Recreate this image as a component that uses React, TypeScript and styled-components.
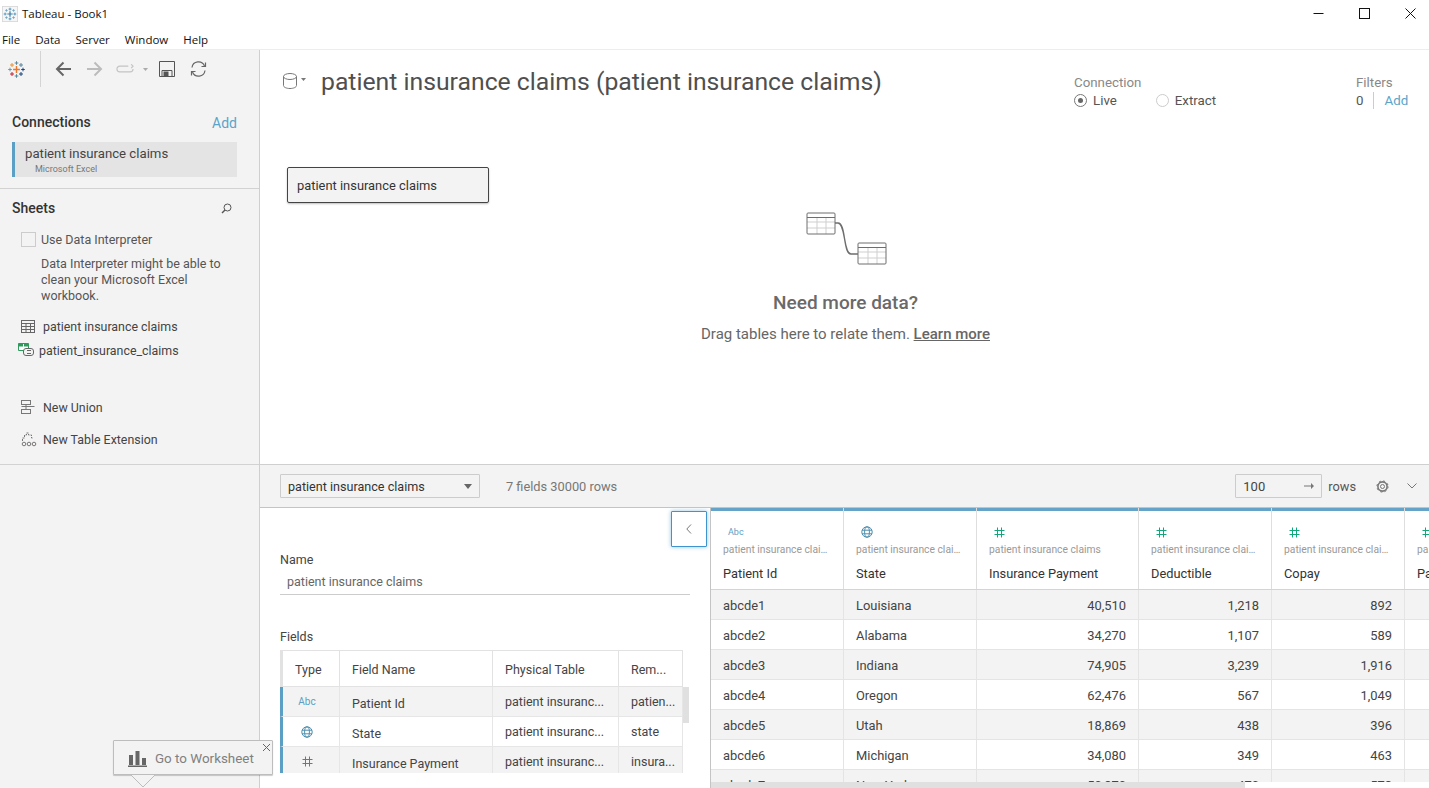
import React from "react";
import styled, { createGlobalStyle } from "styled-components";

const GlobalStyle = createGlobalStyle`
  html, body {
    margin: 0;
    padding: 0;
    height: 100%;
    overflow: hidden;
    background: #ffffff;
  }
  * {
    box-sizing: border-box;
  }
`;

const Window = styled.div`
  display: flex;
  flex-direction: column;
  position: relative;
  width: 1429px;
  height: 788px;
  overflow: hidden;
  font-family: "Roboto", "Liberation Sans", sans-serif;
  color: #444444;
`;

const TitleBar = styled.div`
  display: flex;
  align-items: center;
  height: 27px;
  padding-left: 2px;
  gap: 4px;
  font-family: "Open Sans", "Liberation Sans", sans-serif;
  font-size: 11.5px;
  color: #111111;
`;

const TitleText = styled.span`
  flex: 1;
`;

const WindowControls = styled.div`
  display: flex;
  margin-right: -4px;
`;

const WindowButton = styled.div`
  display: flex;
  align-items: center;
  justify-content: center;
  width: 46px;
  height: 27px;
`;

const MenuBar = styled.div`
  display: flex;
  align-items: center;
  height: 23px;
  padding: 3px 0 0 2px;
  gap: 15px;
  font-family: "Open Sans", "Liberation Sans", sans-serif;
  font-size: 11.5px;
  color: #111111;
  border-bottom: 1px solid #ededed;
`;

const Body = styled.div`
  display: flex;
  flex: 1;
  min-height: 0;
`;

const Sidebar = styled.aside`
  display: flex;
  flex-direction: column;
  width: 260px;
  flex-shrink: 0;
  background: #f3f3f3;
  border-right: 1px solid #cfcfcf;
`;

const Toolbar = styled.div`
  display: flex;
  align-items: center;
  height: 38px;
  padding-left: 8px;
`;

const ToolDivider = styled.span`
  width: 1px;
  height: 36px;
  margin: 0 14px 0 15px;
  background: #d4d4d4;
`;

const ToolIcon = styled.svg<{ $after?: number }>`
  flex-shrink: 0;
  margin-right: ${(p) => p.$after ?? 0}px;
`;

const SideSection = styled.section`
  padding: 0 22px 0 12px;
`;

const ConnectionSection = styled(SideSection)`
  height: 101px;
  padding-top: 25px;
  border-bottom: 1px solid #d2d2d2;
`;

const SideHeader = styled.div`
  display: flex;
  align-items: center;
  justify-content: space-between;
  height: 18px;
  font-size: 14px;
  font-weight: 500;
  color: #333333;
`;

const AddLink = styled.span<{ $size?: number }>`
  font-size: ${(p) => p.$size ?? 14}px;
  font-weight: 400;
  color: #5ba4c9;
`;

const SideAddLink = styled(AddLink)`
  padding-top: 2px;
`;

const ConnectionItem = styled.div`
  height: 35px;
  margin-top: 11px;
  padding: 4px 0 0 10px;
  background: #e4e4e4;
  border-left: 3px solid #5b9fc4;
  font-size: 13.2px;
  line-height: 15px;
  color: #444444;
`;

const ConnectionSub = styled.div`
  margin: 3px 0 0 10px;
  font-size: 9px;
  line-height: 11px;
  color: #777777;
`;

const SheetsSection = styled(SideSection)`
  height: 276px;
  padding-top: 10px;
  padding-right: 27px;
  border-bottom: 1px solid #d2d2d2;
`;

const InterpreterRow = styled.div`
  display: flex;
  align-items: center;
  gap: 5px;
  margin: 15px 0 0 9px;
  font-size: 12.5px;
  color: #555555;
`;

const CheckBox = styled.span`
  width: 15px;
  height: 15px;
  background: #f3f3f3;
  border: 1px solid #cccccc;
`;

const InterpreterHint = styled.p`
  width: 190px;
  margin: 9px 0 0 29px;
  font-size: 12.5px;
  line-height: 16px;
  color: #555555;
`;

const SheetRow = styled.div<{ $top: number; $gap: number; $indent: number }>`
  display: flex;
  align-items: center;
  gap: ${(p) => p.$gap}px;
  height: 16px;
  margin-top: ${(p) => p.$top}px;
  margin-left: ${(p) => p.$indent}px;
  font-size: 12.4px;
  color: #444444;
`;

const Main = styled.main`
  display: flex;
  flex-direction: column;
  flex: 1;
  min-width: 0;
`;

const TopPane = styled.div`
  height: 415px;
  flex-shrink: 0;
  border-bottom: 1px solid #cfcfcf;
`;

const PaneHeader = styled.header`
  display: flex;
  align-items: flex-start;
  height: 117px;
  padding: 17px 13px 0 23px;
`;

const DbIcon = styled.svg`
  margin-top: 6px;
`;

const DbCaret = styled.svg`
  margin: 11px 0 0 4px;
`;

const SourceTitle = styled.h1`
  flex: 1;
  margin: 0 0 0 15px;
  font-size: 24.76px;
  line-height: 30px;
  font-weight: 400;
  color: #4f4f4f;
  white-space: nowrap;
`;

const HeaderGroup = styled.div<{ $width: number }>`
  width: ${(p) => p.$width}px;
  padding-top: 8px;
  font-size: 13.3px;
`;

const GroupLabel = styled.div`
  line-height: 15px;
  color: #888888;
`;

const GroupRow = styled.div`
  display: flex;
  align-items: center;
  height: 20px;
  color: #555555;
`;

const Radio = styled.span<{ $checked?: boolean }>`
  position: relative;
  width: 13px;
  height: 13px;
  margin-right: 6px;
  border: 1px solid ${(p) => (p.$checked ? "#777777" : "#cccccc")};
  border-radius: 50%;
  &::after {
    content: "";
    display: ${(p) => (p.$checked ? "block" : "none")};
    position: absolute;
    top: 3px;
    left: 3px;
    width: 5px;
    height: 5px;
    border-radius: 50%;
    background: #666666;
  }
`;

const RadioSpacer = styled.span`
  width: 39px;
`;

const PipeLine = styled.span`
  width: 1px;
  height: 17px;
  margin: 0 10px 0 10px;
  background: #cccccc;
`;

const NodeBox = styled.div`
  display: flex;
  align-items: center;
  width: 202px;
  height: 36px;
  margin-left: 27px;
  padding-left: 9px;
  background: #f3f3f3;
  border: 1px solid #444444;
  border-radius: 2px;
  box-shadow: 0 1px 2px rgba(0, 0, 0, 0.25);
  font-size: 12.9px;
  color: #333333;
`;

const EmptyState = styled.div`
  display: flex;
  flex-direction: column;
  align-items: center;
  margin-top: 9px;
  padding-left: 2px;
`;

const RelateIcon = styled.svg`
  margin-left: 2px;
`;

const EmptyTitle = styled.div`
  margin-top: 26px;
  font-size: 19px;
  line-height: 22px;
  font-weight: 500;
  color: #6a6a6a;
`;

const EmptyText = styled.div`
  margin-top: 11px;
  font-size: 15px;
  line-height: 18px;
  color: #666666;
`;

const LearnMore = styled.span`
  font-weight: 500;
  text-decoration: underline;
`;

const DataBar = styled.div`
  display: flex;
  align-items: center;
  height: 43px;
  flex-shrink: 0;
  padding: 0 12px 0 20px;
  background: #f3f3f3;
  border-bottom: 1px solid #c4c4c4;
  font-size: 12.8px;
`;

const TableSelect = styled.div`
  display: flex;
  align-items: center;
  justify-content: space-between;
  width: 200px;
  height: 24px;
  padding: 0 7px;
  border: 1px solid #cccccc;
  border-radius: 1px;
  font-size: 12.6px;
  color: #333333;
`;

const Caret = styled.span`
  width: 0;
  height: 0;
  border-left: 4px solid transparent;
  border-right: 4px solid transparent;
  border-top: 5px solid #666666;
`;

const FieldCount = styled.span`
  flex: 1;
  margin-left: 26px;
  color: #777777;
`;

const RowsInput = styled.div`
  display: flex;
  align-items: center;
  justify-content: space-between;
  width: 87px;
  height: 24px;
  padding: 0 7px;
  border: 1px solid #cccccc;
  border-radius: 1px;
  font-size: 13px;
  color: #444444;
`;

const RowsLabel = styled.span`
  margin: 0 20px 0 6px;
  color: #555555;
`;

const Chevron = styled.svg`
  margin-left: 18px;
`;

const LowerPane = styled.div`
  display: flex;
  flex: 1;
  min-height: 0;
`;

const Metadata = styled.div`
  position: relative;
  width: 451px;
  flex-shrink: 0;
  padding: 44px 0 0 20px;
  border-right: 1px solid #c4c4c4;
  overflow: hidden;
`;

const CollapseButton = styled.div`
  position: absolute;
  top: 3px;
  right: 3px;
  display: flex;
  align-items: center;
  justify-content: center;
  width: 36px;
  height: 36px;
  background: #ffffff;
  border: 1px solid #3f93cf;
  border-radius: 1px;
  box-shadow: 0 0 4px rgba(63, 147, 207, 0.55);
`;

const MetaLabel = styled.div`
  font-size: 12.5px;
  line-height: 16px;
  color: #444444;
`;

const NameField = styled.div`
  width: 410px;
  height: 26px;
  margin: 1px 0 34px;
  padding: 5px 0 0 7px;
  border-bottom: 1px solid #cccccc;
  font-size: 12.5px;
  line-height: 16px;
  color: #666666;
`;

const FieldsClip = styled.div`
  position: relative;
  width: 409px;
  height: 123px;
  margin-top: 5px;
  overflow: hidden;
`;

const FieldHeadRow = styled.div`
  display: grid;
  grid-template-columns: 57px 153px 126px 64px;
  width: 403px;
  height: 37px;
  border-top: 1px solid #e2e2e2;
  border-left: 3px solid #e2e2e2;
`;

const FieldHeadCell = styled.div`
  display: flex;
  align-items: center;
  padding: 1px 0 0 12px;
  border-right: 1px solid #e2e2e2;
  border-bottom: 1px solid #e2e2e2;
  font-size: 12.5px;
  color: #444444;
`;

const FieldRow = styled.div<{ $shaded: boolean }>`
  display: grid;
  grid-template-columns: 57px 153px 126px 64px;
  width: 403px;
  height: 30px;
  background: ${(p) => (p.$shaded ? "#f3f3f3" : "#ffffff")};
  border-left: 3px solid #5b9fc4;
  border-bottom: 1px solid #e6e6e6;
`;

const FieldCell = styled.div<{ $drop?: number }>`
  display: flex;
  align-items: center;
  min-width: 0;
  padding: ${(p) => p.$drop ?? 0}px 8px 0 12px;
  border-right: 1px solid #e6e6e6;
  font-size: 12.5px;
  color: #444444;
  overflow: hidden;
  white-space: nowrap;
`;

const TypeCell = styled(FieldCell)`
  justify-content: center;
  padding: 0 8px 0 0;
`;

const AbcGlyph = styled.span<{ $size: number }>`
  font-size: ${(p) => p.$size}px;
  color: #5b9fc4;
`;

const FieldScrollThumb = styled.div`
  position: absolute;
  top: 37px;
  right: 0;
  width: 6px;
  height: 36px;
  background: #e0e0e0;
`;

const Grid = styled.div`
  position: relative;
  flex: 1;
  min-width: 0;
  overflow: hidden;
`;

const GridHeadRow = styled.div`
  display: grid;
  grid-template-columns: 133px 133px 162px 133px 133px 133px;
  height: 82px;
  border-bottom: 1px solid #d4d4d4;
`;

const GridHeadCell = styled.div`
  padding: 17px 13px 0 12px;
  background: linear-gradient(#65a4c8 3px, #ffffff 3px);
  border-right: 1px solid #dedede;
  white-space: nowrap;
  overflow: hidden;
`;

const GridTypeIcon = styled.div`
  display: flex;
  align-items: center;
  height: 14px;
  padding-left: 5px;
`;

const GridSource = styled.div`
  margin-top: 4px;
  font-size: 10.3px;
  line-height: 14px;
  color: #999999;
  overflow: hidden;
  text-overflow: ellipsis;
`;

const GridName = styled.div`
  margin-top: 9px;
  font-size: 12.8px;
  line-height: 16px;
  color: #333333;
`;

const GridRow = styled.div<{ $shaded: boolean }>`
  display: grid;
  grid-template-columns: 133px 133px 162px 133px 133px 133px;
  height: 30px;
  background: ${(p) => (p.$shaded ? "#f3f3f3" : "#ffffff")};
  border-bottom: 1px solid #e4e4e4;
`;

const GridCell = styled.div<{ $right?: boolean }>`
  display: flex;
  align-items: center;
  justify-content: ${(p) => (p.$right ? "flex-end" : "flex-start")};
  padding: 1px 12px 0;
  border-right: 1px solid #e4e4e4;
  font-size: 12.9px;
  color: #444444;
`;

const GridScrollbar = styled.div`
  position: absolute;
  left: 0;
  right: 0;
  bottom: 0;
  height: 6px;
  background: #ffffff;
  &::before {
    content: "";
    display: block;
    width: 534px;
    height: 6px;
    background: #e0e0e0;
  }
`;

const WorksheetTip = styled.div`
  position: absolute;
  left: 113px;
  top: 740px;
  display: flex;
  align-items: center;
  gap: 8px;
  width: 160px;
  height: 35px;
  padding: 2px 0 0 14px;
  background: #f3f3f3;
  border: 1px solid #bdbdbd;
  border-radius: 1px;
  box-shadow: 0 1px 1px rgba(0, 0, 0, 0.2);
  font-size: 13.4px;
  color: #808080;
`;

const TipClose = styled.svg`
  position: absolute;
  top: 2px;
  right: 1px;
`;

const TipArrow = styled.svg`
  position: absolute;
  left: 17px;
  top: 33px;
`;

const fields = [
  { name: "Patient Id", table: "patient insuranc...", remote: "patien...", type: "abc" },
  { name: "State", table: "patient insuranc...", remote: "state", type: "globe" },
  { name: "Insurance Payment", table: "patient insuranc...", remote: "insura...", type: "num" },
];

const columns = [
  { name: "Patient Id", source: "patient insurance claims", type: "abc" },
  { name: "State", source: "patient insurance claims", type: "globe" },
  { name: "Insurance Payment", source: "patient insurance claims", type: "num" },
  { name: "Deductible", source: "patient insurance claims", type: "num" },
  { name: "Copay", source: "patient insurance claims", type: "num" },
  { name: "Pa", source: "pa", type: "num" },
];

const rows = [
  ["abcde1", "Louisiana", "40,510", "1,218", "892"],
  ["abcde2", "Alabama", "34,270", "1,107", "589"],
  ["abcde3", "Indiana", "74,905", "3,239", "1,916"],
  ["abcde4", "Oregon", "62,476", "567", "1,049"],
  ["abcde5", "Utah", "18,869", "438", "396"],
  ["abcde6", "Michigan", "34,080", "349", "463"],
  ["abcde7", "New York", "50,870", "470", "573"],
];

const GlobeIcon = () => (
  <svg width="12" height="12" viewBox="0 0 12 12" fill="none" stroke="#4d8fae" strokeWidth="1">
    <circle cx="6" cy="6" r="5.2" />
    <ellipse cx="6" cy="6" rx="2.4" ry="5.2" />
    <path d="M1 4.2h10M1 7.8h10" />
  </svg>
);

const NumIcon = () => (
  <svg width="11" height="11" viewBox="0 0 11 11" fill="none" stroke="#10a878" strokeWidth="1">
    <path d="M3.5 0.5v10M7.5 0.5v10M0.5 3.5h10M0.5 7.5h10" />
  </svg>
);

const TypeGlyph = ({ type, size }: { type: string; size: number }) => {
  if (type === "abc") return <AbcGlyph $size={size}>Abc</AbcGlyph>;
  if (type === "globe") return <GlobeIcon />;
  return <NumIcon />;
};

const Plus = ({ x, y, r, color, w = 1 }: { x: number; y: number; r: number; color: string; w?: number }) => (
  <path d={`M${x - r} ${y}h${r * 2}M${x} ${y - r}v${r * 2}`} stroke={color} strokeWidth={w} fill="none" />
);

const AppIcon = () => (
  <svg width="16" height="16" viewBox="0 0 18 18">
    <rect x="0.5" y="0.5" width="17" height="17" fill="#f6f6f6" stroke="#d8d8d8" />
    <Plus x={9} y={9} r={3} color="#3f7fa8" w={1.4} />
    <Plus x={9} y={3.5} r={1.6} color="#4c93bb" />
    <Plus x={9} y={14.5} r={1.6} color="#4c93bb" />
    <Plus x={3.5} y={9} r={1.6} color="#4c93bb" />
    <Plus x={14.5} y={9} r={1.6} color="#4c93bb" />
    <Plus x={5} y={5} r={1.4} color="#6aa7c9" />
    <Plus x={13} y={5} r={1.4} color="#6aa7c9" />
    <Plus x={5} y={13} r={1.4} color="#6aa7c9" />
    <Plus x={13} y={13} r={1.4} color="#6aa7c9" />
  </svg>
);

const TableauLogo = () => (
  <ToolIcon width="17" height="17" viewBox="0 0 17 17">
    <Plus x={8.5} y={8.5} r={3.4} color="#e8762d" w={1.4} />
    <Plus x={8.5} y={2} r={1.8} color="#5b879b" />
    <Plus x={8.5} y={15} r={1.8} color="#59879b" />
    <Plus x={2} y={8.5} r={1.8} color="#7099a6" />
    <Plus x={15} y={8.5} r={1.8} color="#1f457e" />
    <Plus x={4} y={4} r={2} color="#eb912b" />
    <Plus x={13} y={4} r={2} color="#59879b" />
    <Plus x={4} y={13} r={2} color="#c72035" />
    <Plus x={13} y={13} r={2} color="#1f457e" />
  </ToolIcon>
);

const TableIcon = () => (
  <svg width="14" height="13" viewBox="0 0 14 13" fill="none" stroke="#666666" strokeWidth="1">
    <rect x="0.5" y="0.5" width="13" height="12" />
    <path d="M0.5 3.5h13M0.5 6.5h13M0.5 9.5h13M5 3.5v9M9.5 3.5v9" />
  </svg>
);

const SchemaIcon = () => (
  <svg width="16" height="14" viewBox="0 0 16 14" fill="none">
    <path d="M0.5 0.5h10v7h-10z" fill="#ffffff" stroke="#2f9a5b" />
    <rect x="0.5" y="0.5" width="4.5" height="3" fill="#2f9a5b" />
    <rect x="6" y="0.5" width="4.5" height="3" fill="#2f9a5b" />
    <rect x="5.5" y="5.5" width="10" height="7" rx="2.5" fill="#f3f3f3" stroke="#666666" />
    <path d="M9 7.5h4M9 10.5h4" stroke="#666666" />
  </svg>
);

const UnionIcon = () => (
  <svg width="14" height="14" viewBox="0 0 14 14" fill="none" stroke="#777777" strokeWidth="1">
    <rect x="0.5" y="0.5" width="9" height="4" />
    <rect x="0.5" y="9.5" width="9" height="4" />
    <path d="M0.5 6.5h13M5 4.5v5" />
  </svg>
);

const ExtensionIcon = () => (
  <svg width="16" height="15" viewBox="0 0 16 15" fill="none" stroke="#777777" strokeWidth="1">
    <path d="M1.5 9V6h2V3h2V1h2v2h3v3h2" strokeDasharray="2 1" />
    <circle cx="3" cy="12" r="1.8" />
    <circle cx="8" cy="12" r="1.8" />
    <circle cx="13" cy="12" r="1.8" />
  </svg>
);

const App: React.FC = () => {
  return (
    <Window>
      <GlobalStyle />
      <TitleBar>
        <AppIcon />
        <TitleText>Tableau - Book1</TitleText>
        <WindowControls>
          <WindowButton>
            <svg width="11" height="11" viewBox="0 0 11 11" stroke="#111111" fill="none">
              <path d="M0.5 5.5h10" />
            </svg>
          </WindowButton>
          <WindowButton>
            <svg width="11" height="11" viewBox="0 0 11 11" stroke="#111111" fill="none">
              <rect x="0.5" y="0.5" width="10" height="10" />
            </svg>
          </WindowButton>
          <WindowButton>
            <svg width="11" height="11" viewBox="0 0 11 11" stroke="#111111" fill="none">
              <path d="M0.5 0.5l10 10M10.5 0.5l-10 10" />
            </svg>
          </WindowButton>
        </WindowControls>
      </TitleBar>
      <MenuBar>
        <span>File</span>
        <span>Data</span>
        <span>Server</span>
        <span>Window</span>
        <span>Help</span>
      </MenuBar>
      <Body>
        <Sidebar>
          <Toolbar>
            <TableauLogo />
            <ToolDivider />
            <ToolIcon $after={16} width="16" height="16" viewBox="0 0 16 16" fill="none" stroke="#666666" strokeWidth="2">
              <path d="M16 8H2M8.5 1.5L2 8l6.5 6.5" />
            </ToolIcon>
            <ToolIcon $after={13} width="16" height="16" viewBox="0 0 16 16" fill="none" stroke="#bcbcbc" strokeWidth="2">
              <path d="M0 8h14M7.5 1.5L14 8l-6.5 6.5" />
            </ToolIcon>
            <ToolIcon $after={9} width="18" height="10" viewBox="0 0 19 10" fill="none" stroke="#c4c4c4" strokeWidth="1.2">
              <path d="M13 2H4a3 3 0 0 0 0 6h11a3 3 0 0 0 3-3M16 0l2 2-2 2" />
            </ToolIcon>
            <ToolIcon $after={11} width="5" height="3" viewBox="0 0 5 3" fill="#aaaaaa">
              <path d="M0 0h5L2.5 3z" />
            </ToolIcon>
            <ToolIcon $after={15} width="16" height="16" viewBox="0 0 16 16" fill="none" stroke="#555555">
              <path d="M0.5 0.5h15v15h-15z" />
              <path d="M3 15.5v-6h10v6" />
              <rect x="5" y="11" width="4" height="4" fill="#555555" />
            </ToolIcon>
            <ToolIcon width="17" height="16" viewBox="0 0 17 16" fill="none" stroke="#666666" strokeWidth="1.2">
              <path d="M2 6.5A6.5 6.5 0 0 1 14.5 5M15 9.5A6.5 6.5 0 0 1 2.5 11" />
              <path d="M15.5 1.5v4h-4M1.5 14.5v-4h4" />
            </ToolIcon>
          </Toolbar>
          <ConnectionSection>
            <SideHeader>
              <span>Connections</span>
              <SideAddLink>Add</SideAddLink>
            </SideHeader>
            <ConnectionItem>
              patient insurance claims
              <ConnectionSub>Microsoft Excel</ConnectionSub>
            </ConnectionItem>
          </ConnectionSection>
          <SheetsSection>
            <SideHeader>
              <span>Sheets</span>
              <svg width="11" height="11" viewBox="0 0 11 11" fill="none" stroke="#555555" strokeWidth="1">
                <circle cx="6.5" cy="4.5" r="3.5" />
                <path d="M4 7l-3 3" strokeWidth="1.4" />
              </svg>
            </SideHeader>
            <InterpreterRow>
              <CheckBox />
              Use Data Interpreter
            </InterpreterRow>
            <InterpreterHint>
              Data Interpreter might be able to clean your Microsoft Excel workbook.
            </InterpreterHint>
            <SheetRow $top={14} $gap={8} $indent={9}>
              <TableIcon />
              patient insurance claims
            </SheetRow>
            <SheetRow $top={8} $gap={5} $indent={6}>
              <SchemaIcon />
              patient_insurance_claims
            </SheetRow>
            <SheetRow $top={41} $gap={8} $indent={9}>
              <UnionIcon />
              New Union
            </SheetRow>
            <SheetRow $top={16} $gap={6} $indent={9}>
              <ExtensionIcon />
              New Table Extension
            </SheetRow>
          </SheetsSection>
        </Sidebar>
        <Main>
          <TopPane>
            <PaneHeader>
              <DbIcon width="14" height="16" viewBox="0 0 14 16" fill="none" stroke="#777777" strokeWidth="1">
                <path d="M0.5 3.5v9c0 1.7 2.9 3 6.5 3s6.5-1.3 6.5-3v-9" />
                <ellipse cx="7" cy="3.5" rx="6.5" ry="3" />
              </DbIcon>
              <DbCaret width="5" height="3" viewBox="0 0 5 3" fill="#777777">
                <path d="M0 0h5L2.5 3z" />
              </DbCaret>
              <SourceTitle>patient insurance claims (patient insurance claims)</SourceTitle>
              <HeaderGroup $width={282}>
                <GroupLabel>Connection</GroupLabel>
                <GroupRow>
                  <Radio $checked />
                  Live
                  <RadioSpacer />
                  <Radio />
                  Extract
                </GroupRow>
              </HeaderGroup>
              <HeaderGroup $width={60}>
                <GroupLabel>Filters</GroupLabel>
                <GroupRow>
                  0
                  <PipeLine />
                  <AddLink $size={13.3}>Add</AddLink>
                </GroupRow>
              </HeaderGroup>
            </PaneHeader>
            <NodeBox>patient insurance claims</NodeBox>
            <EmptyState>
              <RelateIcon width="82" height="54" viewBox="0 0 82 54" fill="none">
                <g stroke="#cfcfcf">
                  <path d="M1 10h28M1 16h28M11 6v16M20 6v16" />
                  <path d="M52 40h28M52 46h28M62 36v16M71 36v16" />
                </g>
                <g stroke="#6e6e6e">
                  <rect x="1" y="1" width="28" height="21" rx="1" />
                  <path d="M1 5.5h28" />
                  <rect x="52" y="31" width="28" height="21" rx="1" />
                  <path d="M52 35.5h28" />
                  <path d="M29 11h3c8 0 5 31 13 31h7" strokeWidth="1.4" />
                </g>
              </RelateIcon>
              <EmptyTitle>Need more data?</EmptyTitle>
              <EmptyText>
                Drag tables here to relate them. <LearnMore>Learn more</LearnMore>
              </EmptyText>
            </EmptyState>
          </TopPane>
          <DataBar>
            <TableSelect>
              patient insurance claims
              <Caret />
            </TableSelect>
            <FieldCount>7 fields 30000 rows</FieldCount>
            <RowsInput>
              100
              <svg width="10" height="8" viewBox="0 0 10 8" fill="#777777">
                <path d="M0 3.4h7V1l3 3-3 3V4.6H0z" />
              </svg>
            </RowsInput>
            <RowsLabel>rows</RowsLabel>
            <svg width="13" height="13" viewBox="0 0 13 13" fill="none" stroke="#777777">
              <circle cx="6.5" cy="6.5" r="2" />
              <circle cx="6.5" cy="6.5" r="4.6" strokeWidth="1.6" />
              <circle cx="6.5" cy="6.5" r="5.6" strokeWidth="1" strokeDasharray="2 2.4" />
            </svg>
            <Chevron width="10" height="6" viewBox="0 0 10 6" fill="none" stroke="#777777">
              <path d="M0.5 0.5L5 5l4.5-4.5" />
            </Chevron>
          </DataBar>
          <LowerPane>
            <Metadata>
              <CollapseButton>
                <svg width="6" height="10" viewBox="0 0 6 10" fill="none" stroke="#777777">
                  <path d="M5 0.5L0.8 5 5 9.5" />
                </svg>
              </CollapseButton>
              <MetaLabel>Name</MetaLabel>
              <NameField>patient insurance claims</NameField>
              <MetaLabel>Fields</MetaLabel>
              <FieldsClip>
                <FieldHeadRow>
                  <FieldHeadCell>Type</FieldHeadCell>
                  <FieldHeadCell>Field Name</FieldHeadCell>
                  <FieldHeadCell>Physical Table</FieldHeadCell>
                  <FieldHeadCell>Rem...</FieldHeadCell>
                </FieldHeadRow>
                {fields.map((f, i) => (
                  <FieldRow key={f.name} $shaded={i % 2 === 0}>
                    <TypeCell>
                      <TypeGlyph type={f.type} size={10} />
                    </TypeCell>
                    <FieldCell $drop={3}>{f.name}</FieldCell>
                    <FieldCell>{f.table}</FieldCell>
                    <FieldCell>{f.remote}</FieldCell>
                  </FieldRow>
                ))}
                <FieldScrollThumb />
              </FieldsClip>
            </Metadata>
            <Grid>
              <GridHeadRow>
                {columns.map((c, i) => (
                  <GridHeadCell key={i}>
                    <GridTypeIcon>
                      <TypeGlyph type={c.type} size={9} />
                    </GridTypeIcon>
                    <GridSource>{c.source}</GridSource>
                    <GridName>{c.name}</GridName>
                  </GridHeadCell>
                ))}
              </GridHeadRow>
              {rows.map((r, i) => (
                <GridRow key={r[0]} $shaded={i % 2 === 0}>
                  {r.map((v, j) => (
                    <GridCell key={j} $right={j > 1}>
                      {v}
                    </GridCell>
                  ))}
                  <GridCell />
                </GridRow>
              ))}
              <GridScrollbar />
            </Grid>
          </LowerPane>
        </Main>
      </Body>
      <WorksheetTip>
        <svg width="19" height="17" viewBox="0 0 19 17" fill="#666666">
          <rect x="1" y="5" width="4" height="10" />
          <rect x="7.5" y="1" width="4" height="14" />
          <rect x="14" y="8" width="4" height="7" />
          <rect x="0" y="15.5" width="19" height="1.5" />
        </svg>
        Go to Worksheet
        <TipClose width="9" height="9" viewBox="0 0 9 9" fill="none" stroke="#666666">
          <path d="M1 1l7 7M8 1L1 8" />
        </TipClose>
        <TipArrow width="24" height="15" viewBox="0 0 24 15">
          <path d="M0 1l12 12L24 1" fill="#f3f3f3" stroke="#bdbdbd" />
        </TipArrow>
      </WorksheetTip>
    </Window>
  );
};

export default App;
